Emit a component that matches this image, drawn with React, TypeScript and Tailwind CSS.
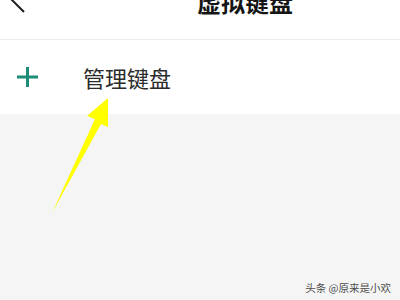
export default function App() {
  return (
    <div
      className="relative w-[400px] h-[300px] overflow-hidden bg-[#f5f5f5]"
      style={{ fontFamily: '"Noto Sans CJK SC", "Noto Sans", sans-serif' }}
    >
      {/* Header */}
      <div className="flex h-[40px] items-start bg-white border-b border-[#ececec]">
        <svg width="40" height="20" viewBox="0 0 40 20" className="shrink-0 overflow-visible">
          <path d="M24 -12 L12 0 L24 12" fill="none" stroke="#1e1e1e" strokeWidth="2" />
        </svg>
        <div className="ml-[157px] -mt-[10px] text-[24px] leading-[24px] font-bold text-[#151515]">
          虚拟键盘
        </div>
      </div>

      {/* Row */}
      <div className="flex h-[74px] items-center bg-white">
        <svg width="21" height="20" viewBox="0 0 21 20" className="ml-[17px] shrink-0">
          <path d="M0 10 H21 M10.5 0 V20" stroke="#1b8c7a" strokeWidth="3" />
        </svg>
        <span className="ml-[45px] text-[22px] leading-none text-[#2b2b2b]">管理键盘</span>
      </div>

      {/* Annotation arrow */}
      <svg
        width="400"
        height="300"
        viewBox="0 0 400 300"
        className="absolute left-0 top-0 pointer-events-none"
      >
        <polygon points="108,98 87,116 95,119 52,213 101,124 108,127" fill="#ffff00" />
      </svg>

      {/* Watermark */}
      <div
        className="absolute right-[9px] top-[280px] text-[10.5px] leading-[16px] text-[#4a4a4a]"
        style={{ textShadow: '0 0 2px #fff' }}
      >
        头条 @原来是小欢
      </div>
    </div>
  )
}
